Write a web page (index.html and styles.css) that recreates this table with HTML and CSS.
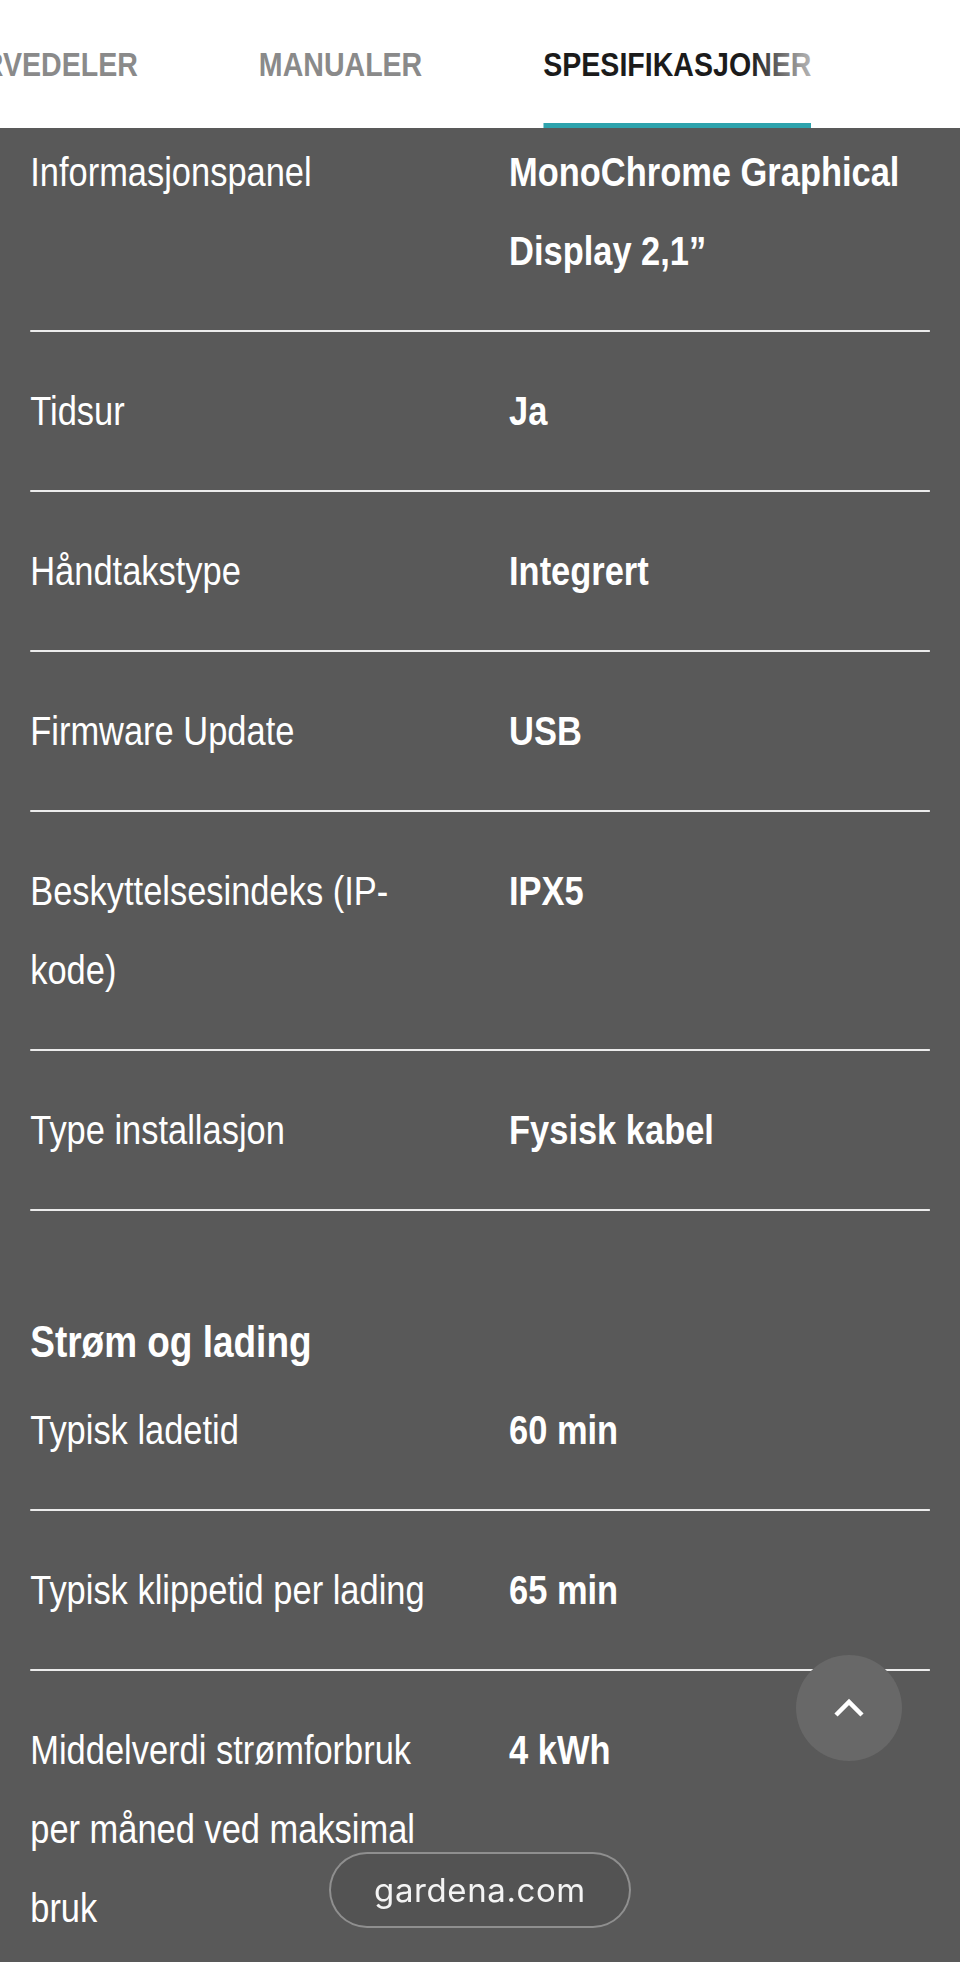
FILE: index.html
```html
<!DOCTYPE html>
<html lang="no">
<head>
  <meta charset="UTF-8" />
  <meta name="viewport" content="width=device-width, initial-scale=1.0"/>
  <title>Spesifikasjoner</title>
  <link rel="stylesheet" href="styles.css">
</head>
<body>

<!-- no condensed face installed, so the page is squeezed horizontally -->
<div class="page">
  <header class="tabs">
    <nav class="tab-list">
      <a class="tab" href="#">RESERVEDELER</a>
      <a class="tab" href="#">MANUALER</a>
      <a class="tab active" href="#">SPESIFIKASJONER</a>
    </nav>
    <span class="tabs-fade"></span>
  </header>

  <main class="specs">
    <div class="spec-row top">
      <span class="spec-label">Informasjonspanel</span>
      <span class="spec-value">MonoChrome Graphical Display 2,1”</span>
    </div>
    <div class="spec-row">
      <span class="spec-label">Tidsur</span>
      <span class="spec-value">Ja</span>
    </div>
    <div class="spec-row">
      <span class="spec-label">Håndtakstype</span>
      <span class="spec-value">Integrert</span>
    </div>
    <div class="spec-row">
      <span class="spec-label">Firmware Update</span>
      <span class="spec-value">USB</span>
    </div>
    <div class="spec-row">
      <span class="spec-label">Beskyttelsesindeks (IP-kode)</span>
      <span class="spec-value">IPX5</span>
    </div>
    <div class="spec-row">
      <span class="spec-label">Type installasjon</span>
      <span class="spec-value">Fysisk kabel</span>
    </div>

    <h2 class="spec-heading">Strøm og lading</h2>
    <div class="spec-row">
      <span class="spec-label">Typisk ladetid</span>
      <span class="spec-value">60 min</span>
    </div>
    <div class="spec-row">
      <span class="spec-label">Typisk klippetid per lading</span>
      <span class="spec-value">65 min</span>
    </div>
    <div class="spec-row">
      <span class="spec-label">Middelverdi strømforbruk per måned ved maksimal bruk</span>
      <span class="spec-value">4 kWh</span>
    </div>
  </main>
</div>

<button class="to-top" aria-label="Til toppen">
  <svg width="32" height="20" viewBox="0 0 32 20">
    <polyline points="3,17 16,4 29,17" fill="none" stroke="#fff" stroke-width="4.5"/>
  </svg>
</button>

<div class="url-pill">gardena.com</div>

</body>
</html>
```

FILE: styles.css
```css
html, body {
  margin: 0;
  height: 100%;
  overflow: hidden;
}

body {
  font-family: "Liberation Sans", Arial, sans-serif;
  background-color: #595959;
  color: #fff;
}

/* 960 / 0.84 wide, then squeezed back to 960 */
.page {
  width: 1143px;
  transform: scaleX(0.84);
  transform-origin: 0 0;
}

/* tab bar, scrolled to the end */
.tabs {
  position: relative;
  height: 128px;
  background: #fff;
  overflow: hidden;
}

.tab-list {
  display: flex;
  justify-content: flex-end;
  gap: 144px;
  padding-right: 177px;
}

.tab {
  flex: none;
  white-space: nowrap;
  font-size: 34px;
  font-weight: bold;
  line-height: 128px;
  color: #8a8a8a;
  text-decoration: none;
}

.tab.active {
  color: #1b1b1b;
  box-shadow: inset 0 -5px 0 #2ea3ad;
}

.tabs-fade {
  position: absolute;
  top: 0;
  right: 0;
  width: 250px;
  height: 122px;
  background: linear-gradient(to right, rgba(255,255,255,0), rgba(255,255,255,0.6) 25%, #fff 50%);
}

/* spec table */
.specs {
  padding: 0 36px;
}

.spec-row {
  display: grid;
  grid-template-columns: 500px 1fr;
  column-gap: 70px;
  padding: 40px 0 39px;
  border-bottom: 2px solid #ececec;
  font-size: 41px;
  line-height: 79px;
}

.spec-row.top {
  padding-top: 5px;
}

.spec-value {
  font-weight: bold;
}

.spec-heading {
  margin: 106px 0 24px;
  font-size: 44px;
  line-height: 50px;
  font-weight: bold;
}

.spec-heading + .spec-row {
  padding-top: 0;
}

/* floating bits */
.to-top {
  position: fixed;
  right: 58px;
  bottom: 201px;
  width: 106px;
  height: 106px;
  border: none;
  border-radius: 50%;
  background: #686868;
  display: flex;
  align-items: center;
  justify-content: center;
  padding: 0;
  cursor: pointer;
}

.url-pill {
  position: fixed;
  left: 50%;
  bottom: 34px;
  transform: translateX(-50%);
  width: 298px;
  height: 72px;
  border: 2px solid rgba(255,255,255,0.35);
  border-radius: 40px;
  background: rgba(82,82,82,0.85);
  display: flex;
  align-items: center;
  justify-content: center;
  font-family: "Inter", "Liberation Sans", sans-serif;
  font-size: 33px;
  letter-spacing: 0.6px;
  color: #f4f4f4;
}
```
